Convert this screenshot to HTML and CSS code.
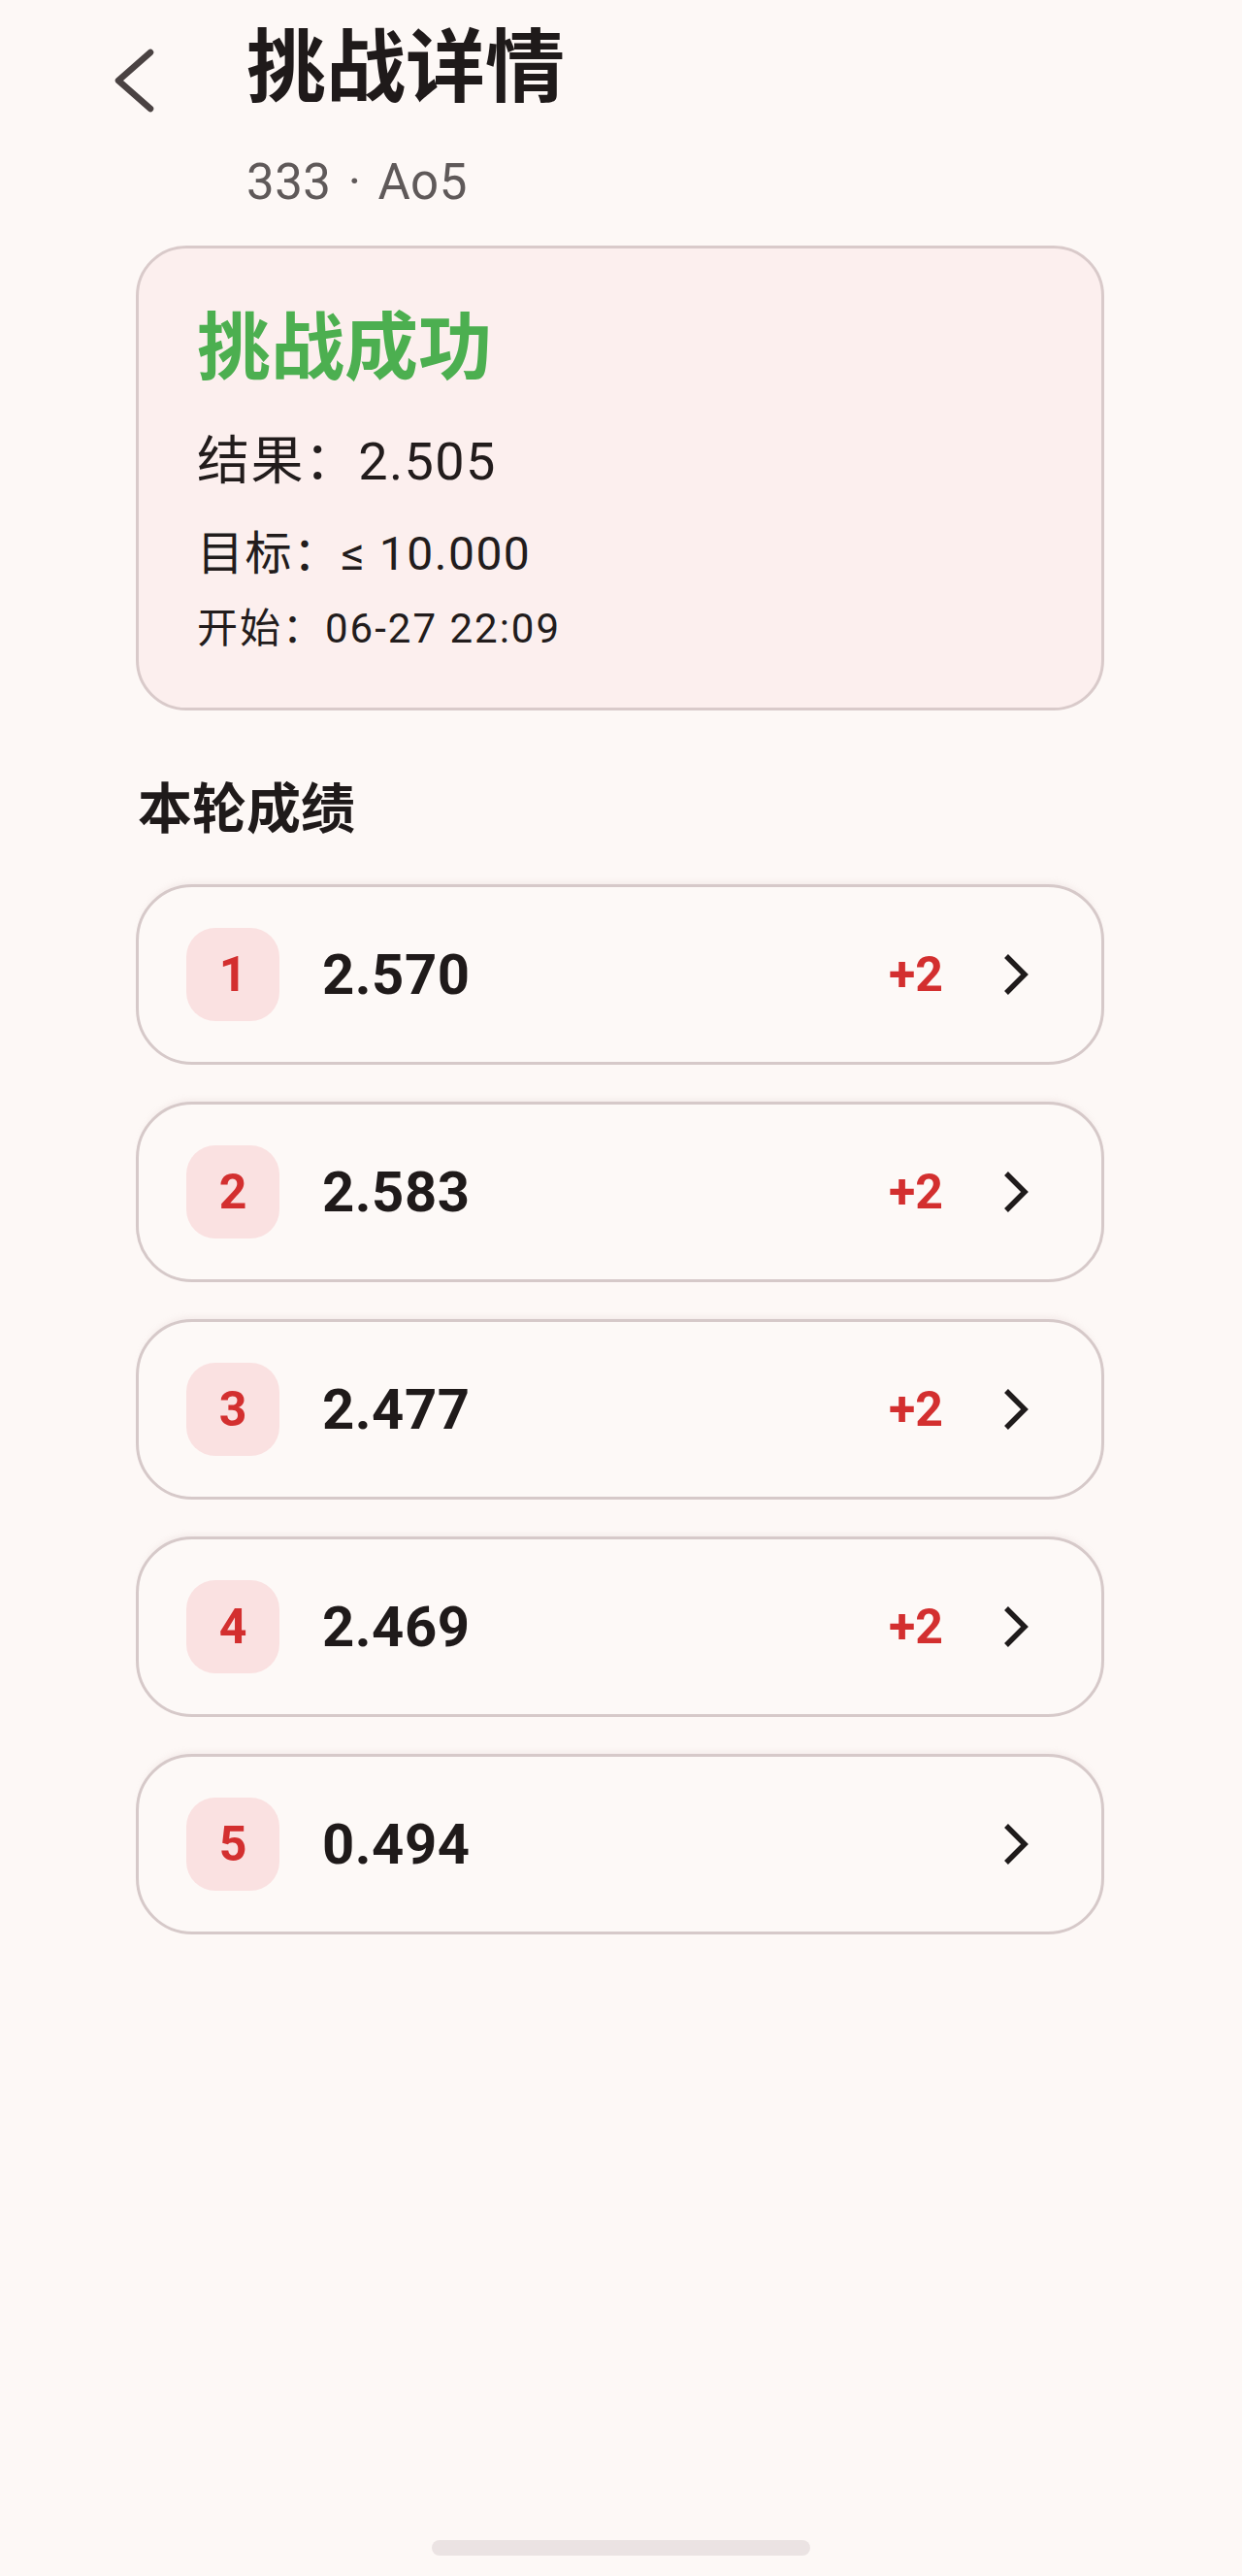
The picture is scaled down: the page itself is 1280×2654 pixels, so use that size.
FILE: index.html
```html
<!DOCTYPE html>
<html lang="zh-CN">
<head>
<meta charset="utf-8">
<title>挑战详情</title>
<link rel="stylesheet" href="styles.css">
</head>
<body>
<div class="page">
  <header class="header">
    <div class="back">
      <svg width="56" height="80" viewBox="0 0 56 80"><path d="M43 10 L10 39 L43 68" fill="none" stroke="#4a4242" stroke-width="6.5" stroke-linecap="round" stroke-linejoin="round"/></svg>
    </div>
    <div class="titles">
      <h1 class="title">挑战详情</h1>
      <div class="subtitle">333 <span class="dot">·</span> Ao5</div>
    </div>
  </header>

  <main class="content">
    <section class="result-card">
      <div class="status">挑战成功</div>
      <div class="line result">结果：2.505</div>
      <div class="line target">目标：≤ 10.000</div>
      <div class="line start">开始：06-27 22:09</div>
    </section>

    <h2 class="section-title">本轮成绩</h2>

    <ul class="solves">
      <li class="solve">
        <span class="badge">1</span>
        <span class="time">2.570</span>
        <span class="penalty">+2</span>
        <svg class="chev" width="32" height="48" viewBox="0 0 32 48"><path d="M7 5 L26 24 L7 43" fill="none" stroke="#1f1b1b" stroke-width="5.5"/></svg>
      </li>
      <li class="solve">
        <span class="badge">2</span>
        <span class="time">2.583</span>
        <span class="penalty">+2</span>
        <svg class="chev" width="32" height="48" viewBox="0 0 32 48"><path d="M7 5 L26 24 L7 43" fill="none" stroke="#1f1b1b" stroke-width="5.5"/></svg>
      </li>
      <li class="solve">
        <span class="badge">3</span>
        <span class="time">2.477</span>
        <span class="penalty">+2</span>
        <svg class="chev" width="32" height="48" viewBox="0 0 32 48"><path d="M7 5 L26 24 L7 43" fill="none" stroke="#1f1b1b" stroke-width="5.5"/></svg>
      </li>
      <li class="solve">
        <span class="badge">4</span>
        <span class="time">2.469</span>
        <span class="penalty">+2</span>
        <svg class="chev" width="32" height="48" viewBox="0 0 32 48"><path d="M7 5 L26 24 L7 43" fill="none" stroke="#1f1b1b" stroke-width="5.5"/></svg>
      </li>
      <li class="solve">
        <span class="badge">5</span>
        <span class="time">0.494</span>
        <span class="penalty"></span>
        <svg class="chev" width="32" height="48" viewBox="0 0 32 48"><path d="M7 5 L26 24 L7 43" fill="none" stroke="#1f1b1b" stroke-width="5.5"/></svg>
      </li>
    </ul>
  </main>

  <div class="home-indicator"></div>
</div>
</body>
</html>
```

FILE: styles.css
```css
* { box-sizing: border-box; }

html, body {
  margin: 0;
  padding: 0;
  background: #fdf8f6;
}

body {
  font-family: Roboto, "Noto Sans CJK SC", "Noto Sans", sans-serif;
  color: #1f1a1a;
}

.page {
  position: relative;
  width: 1280px;
  height: 2654px;
  overflow: hidden;
}

.header {
  display: flex;
  align-items: flex-start;
  padding-left: 112px;
}

.back {
  width: 142px;
  padding-top: 44px;
}

.back svg { display: block; }

.titles {
  display: flex;
  flex-direction: column;
}

.title {
  margin: 22px 0 0;
  font-size: 82px;
  line-height: 82px;
  font-weight: 700;
  color: #1f1a1a;
  font-family: "Noto Sans CJK SC", sans-serif;
}

.subtitle {
  margin-top: 58px;
  font-size: 51px;
  line-height: 52px;
  color: #5f5959;
  letter-spacing: 0.5px;
}

.subtitle .dot {
  margin: 0 4px;
}

.content {
  padding: 39px 142px 0 140px;
}

.result-card {
  height: 479px;
  border: 3px solid #d9caca;
  border-radius: 52px;
  background: #fcefee;
  padding: 58px 0 0 60px;
}

.status {
  font-family: "Noto Sans CJK SC", sans-serif;
  font-size: 76px;
  line-height: 76px;
  font-weight: 700;
  color: #4caf50;
}

.line {
  color: #221c1c;
}

.result {
  margin-top: 59px;
  font-size: 54px;
  line-height: 54px;
  letter-spacing: 1.4px;
}

.target {
  margin-top: 44px;
  font-size: 48px;
  line-height: 48px;
  letter-spacing: 1.5px;
}

.start {
  margin-top: 32px;
  font-size: 42px;
  line-height: 42px;
  letter-spacing: 2px;
}

.section-title {
  margin: 69px 0 0 2px;
  font-family: "Noto Sans CJK SC", sans-serif;
  font-size: 56px;
  line-height: 56px;
  font-weight: 700;
  color: #1f1a1a;
}

.solves {
  list-style: none;
  margin: 54px 0 0;
  padding: 0;
  display: flex;
  flex-direction: column;
  gap: 38px;
}

.solve {
  height: 186px;
  border: 3px solid #d6c9c9;
  border-radius: 58px;
  background: #fdf9f7;
  box-shadow: 0 -6px 6px -4px rgba(200, 180, 180, 0.18);
  display: flex;
  align-items: center;
  padding: 0 73px 0 49px;
}

.badge {
  width: 96px;
  height: 96px;
  border-radius: 30px;
  background: #fae1e1;
  color: #d32f2f;
  font-size: 50px;
  font-weight: 700;
  display: flex;
  align-items: center;
  justify-content: center;
}

.time {
  margin-left: 44px;
  font-size: 58px;
  font-weight: 700;
  color: #1f1a1a;
  letter-spacing: 0.5px;
  flex: 1;
}

.penalty {
  font-size: 50px;
  font-weight: 700;
  color: #d32f2f;
  margin-right: 58px;
}

.chev { display: block; }

.home-indicator {
  position: absolute;
  left: 445px;
  bottom: 21px;
  width: 390px;
  height: 16px;
  border-radius: 8px;
  background: #ebe3e3;
}
```
